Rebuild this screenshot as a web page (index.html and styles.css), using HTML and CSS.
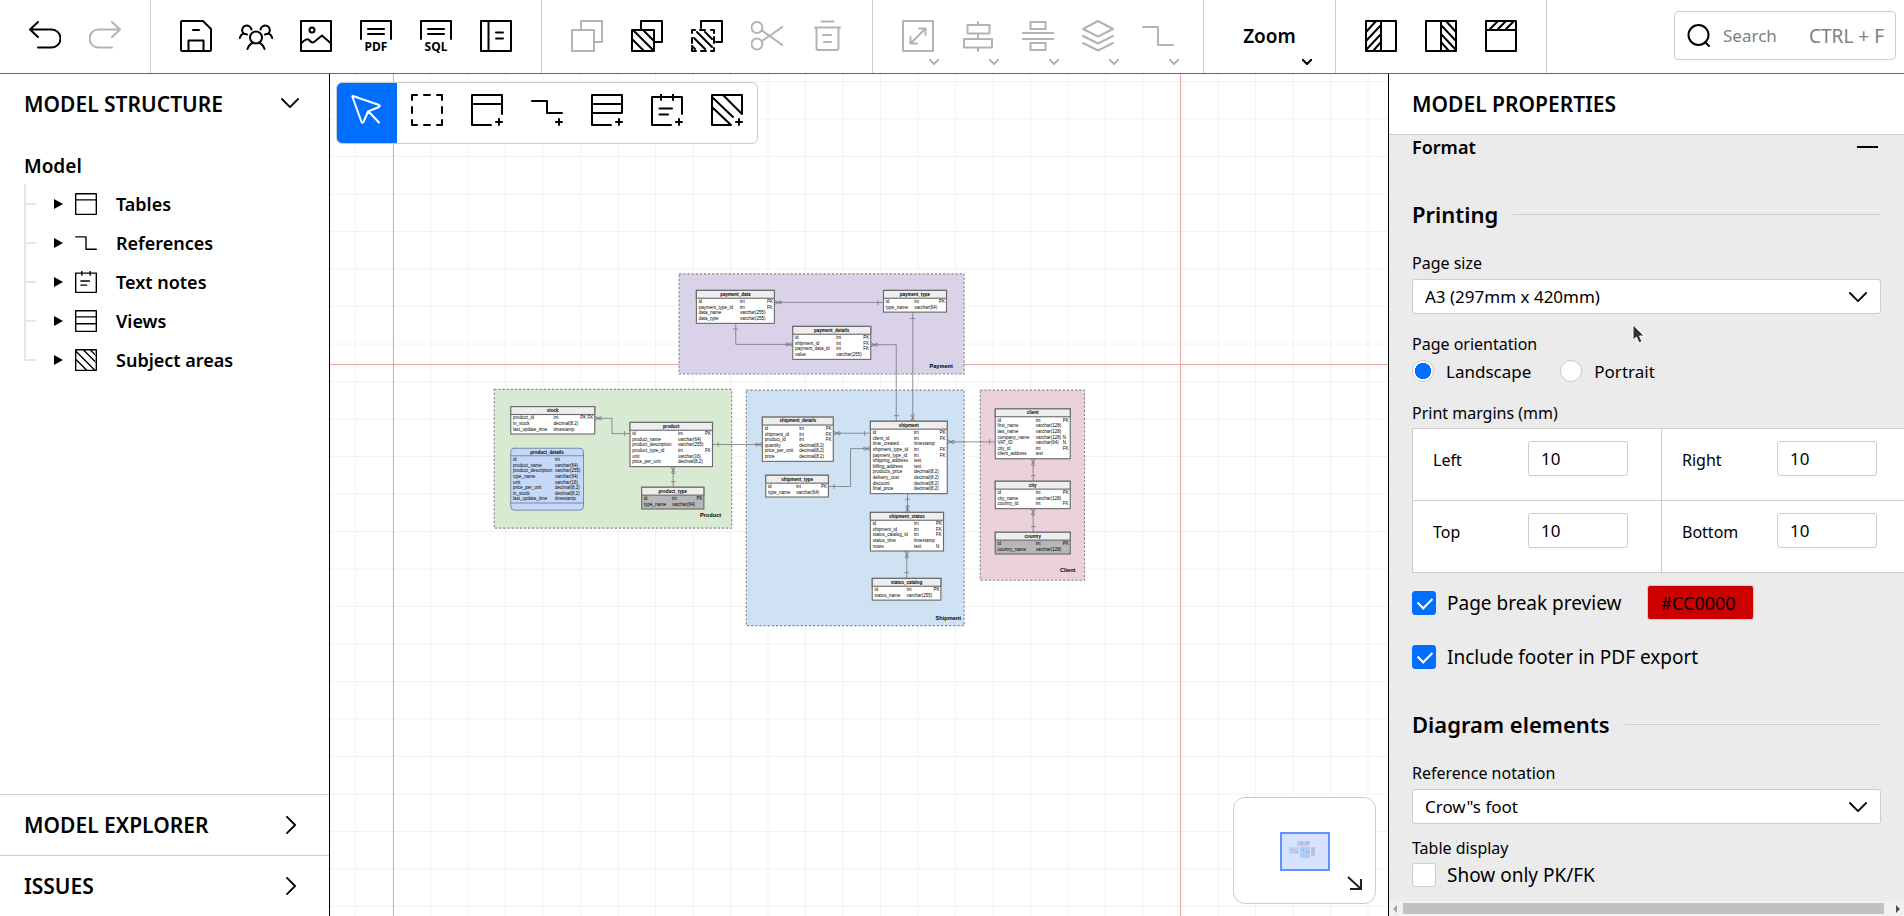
FILE: index.html
```html
<!DOCTYPE html>
<html lang="en">
<head>
    <meta charset="UTF-8">
    <meta name="viewport" content="width=device-width, initial-scale=1.0">
    <title>Database Modeler</title>
    <link rel="stylesheet" href="styles.css">
</head>
<body>
    <!-- icon set -->
    <svg class="sprite" aria-hidden="true">
        <symbol id="i-undo" viewBox="0 0 32 32"><path d="M9 2 1 9.5 9 17M1 9.5h21.5a9 9 0 0 1 0 18H9"/></symbol>
        <symbol id="i-redo" viewBox="0 0 32 32"><path d="m23 2 8 7.500L23 17M31 9.500H9.500a9 9 0 0 0 0 18H23"/></symbol>
        <symbol id="i-save" viewBox="0 0 32 32"><path d="M2 1h21l8 8v20.500q0 1.500-1.500 1.500h-27Q1 31 1 29.500V2q0-1 1-1zM8.500 31V20.500h15V31M13 10h6"/></symbol>
        <symbol id="i-users" viewBox="0 0 34 32"><circle cx="17" cy="17.500" r="6"/><path d="M8.500 29c1-3 2.500-5 5-6M25.500 29c-1-3-2.500-5-5-6M12.500 9.500a4.700 4.700 0 1 0-8 4C2.500 14.200 1.200 16 .8 18M4.500 13.500l3.500 1M21.500 9.500a4.700 4.700 0 1 1 8 4c2 .7 3.300 2.500 3.700 4.500M29.500 13.500l-3.500 1"/></symbol>
        <symbol id="i-image" viewBox="0 0 32 32"><path d="M1 1h30v30H1zM1 23.500q6-6 8-3.500 3 3.500 5 2l8-6.500 9 8"/><circle cx="12" cy="10" r="2.500"/></symbol>
        <symbol id="i-report" viewBox="0 0 32 32"><path d="M1 1h30v30H1zM8.500 1v30M16 12.500h7M16 18.500h7"/></symbol>
        <symbol id="i-copy" viewBox="0 0 32 32"><path d="M10 10V1h21v21h-8M1 10h22v21H1z"/></symbol>
        <symbol id="i-copy-area" viewBox="0 0 32 32"><path d="M10 10V1h21v21h-8M1 10h22v21H1zM3 11l19 19M13 11l9 9M1 19l11 11"/></symbol>
        <symbol id="i-copy-dash" viewBox="0 0 32 32"><path d="M10 8V1h21v21h-6M1 13v-3h3M9 10h5M20 10h3v3M23 17v6M23 28v3h-3M15 31h-5M5 31H1v-3M1 23v-5M6 12l15 15M14 12l7 7M3 18l11 11M1 26l3 3"/></symbol>
        <symbol id="i-cut" viewBox="0 0 32 32"><circle cx="6" cy="7.500" r="5.500"/><circle cx="6" cy="24" r="5.500"/><path d="M11 10.500 32 25.500M11 21 32 6.500"/></symbol>
        <symbol id="i-delete" viewBox="0 0 32 32"><path d="M10.500 1.500h12M4 7.500h25M5.500 7.500V28q0 2 2 2h18q2 0 2-2V7.500M12 15h8M13 22h7"/></symbol>
        <symbol id="i-resize" viewBox="0 0 32 32"><path d="M1 1h30v30H1zM8.500 23.500l15-15M17 8.500h6.500V15M8.500 17v6.500H15"/></symbol>
        <symbol id="i-center" viewBox="0 0 32 32"><path d="M16 2v3M5.500 5h22v8.500h-22zM16 13.500V19M2 19h28v8.500H2zM16 27.500V31"/></symbol>
        <symbol id="i-distribute" viewBox="0 0 32 32"><path d="M8.500 2h15v7h-15zM0 13h32M0 19h32M8.500 23h15v7h-15z"/></symbol>
        <symbol id="i-layers" viewBox="0 0 32 32"><path d="M16 1l15 8-15 7.500L1 9zM1 16l15 7.500L31 16M1 23l15 7.500L31 23"/></symbol>
        <symbol id="i-ref" viewBox="0 0 32 32"><path d="M1 7h15v18h15"/></symbol>
        <symbol id="i-panel-left" viewBox="0 0 32 32"><path d="M1 1h30v30H1zM16 1v30M1 12 11 1M1 21 16 5M1 30 16 14M8 31l8-9"/></symbol>
        <symbol id="i-panel-right" viewBox="0 0 32 32"><path d="M1 1h30v30H1zM16 1v30M31 12 21 1M31 21 16 5M31 30 16 14M24 31l-8-9"/></symbol>
        <symbol id="i-panel-top" viewBox="0 0 32 32"><path d="M1 1h30v30H1zM1 10h30M5 9l7-7M13 9l7-7M21 9l7-7"/></symbol>
        <symbol id="i-search" viewBox="0 0 24 24"><circle cx="11.500" cy="11" r="10"/><path d="m18 18 4 4"/></symbol>
        <symbol id="i-down" viewBox="0 0 20 12"><path d="m1 1 9 9 9-9"/></symbol>
        <symbol id="i-right" viewBox="0 0 12 20"><path d="m1 1 9 9-9 9"/></symbol>

        <symbol id="i-pointer" viewBox="0 0 32 32"><path d="M2 2l26 9q1.500 1 0 2l-11 4.500L12.500 28q-1 1.500-2 0L1.500 3Q1 2 2 2zM17.500 17.500 28 28.500"/></symbol>
        <symbol id="i-marquee" viewBox="0 0 32 32"><path d="M1 6V1h5M13 1h6M26 1h5v5M31 13v6M31 26v5h-5M19 31h-6M6 31H1v-5M1 19v-6"/></symbol>
        <symbol id="i-table" viewBox="0 0 32 32"><path d="M1 1h30v30H1zM1 10h30"/></symbol>
        <symbol id="i-note" viewBox="0 0 32 32"><path d="M1 3h30v28H1zM10 0v6M22 0v6M8.500 14.500H21M8.500 20.500H17"/></symbol>
        <symbol id="i-view" viewBox="0 0 32 32"><path d="M1 1h30v30H1zM1 10h30M1 20h30"/></symbol>
        <symbol id="i-area" viewBox="0 0 32 32"><path d="M1 1h30v30H1zM1 3l28 28M12 1l19 19M1 15l16 16M22 1l9 9"/></symbol>
        <symbol id="i-add-table" viewBox="0 0 32 32"><path d="M31 20V1H1v30h19M1 10h30M28 25v6M25 28h6"/></symbol>
        <symbol id="i-add-ref" viewBox="0 0 32 32"><path d="M1 7h15v12h15M28 25v6M25 28h6"/></symbol>
        <symbol id="i-add-view" viewBox="0 0 32 32"><path d="M31 19V1H1v30h19M1 10h30M1 19h30M28 25v6M25 28h6"/></symbol>
        <symbol id="i-add-note" viewBox="0 0 32 32"><path d="M31 20V3H1v28h19M10 0v6M22 0v6M8.500 14.500H21M8.500 20.500H17M28 25v6M25 28h6"/></symbol>
        <symbol id="i-add-area" viewBox="0 0 32 32"><path d="M31 20V1H1v30h19L1 13M1 3l21 20M12 1l19 19M28 25v6M25 28h6"/></symbol>
    </svg>

    <header class="topbar">
        <div class="group">
            <button class="tool" aria-label="Undo"><svg class="icon"><use href="#i-undo"/></svg></button>
            <button class="tool off" aria-label="Redo"><svg class="icon"><use href="#i-redo"/></svg></button>
        </div>
        <div class="group">
            <button class="tool" aria-label="Save"><svg class="icon"><use href="#i-save"/></svg></button>
            <button class="tool" aria-label="Share"><svg class="icon wide"><use href="#i-users"/></svg></button>
            <button class="tool" aria-label="Export image"><svg class="icon"><use href="#i-image"/></svg></button>
            <button class="tool" aria-label="Export PDF"><svg class="icon" viewBox="0 0 32 32"><path d="M1 19V1h30v18M8 9h16M8 14h16"/><text x="16" y="31">PDF</text></svg></button>
            <button class="tool" aria-label="Generate SQL"><svg class="icon" viewBox="0 0 32 32"><path d="M1 19V1h30v18M8 9h16M8 14h16"/><text x="16" y="31">SQL</text></svg></button>
            <button class="tool" aria-label="Documentation"><svg class="icon"><use href="#i-report"/></svg></button>
        </div>
        <div class="group">
            <button class="tool off" aria-label="Copy"><svg class="icon"><use href="#i-copy"/></svg></button>
            <button class="tool" aria-label="Copy area"><svg class="icon"><use href="#i-copy-area"/></svg></button>
            <button class="tool" aria-label="Copy area outline"><svg class="icon"><use href="#i-copy-dash"/></svg></button>
            <button class="tool off" aria-label="Cut"><svg class="icon"><use href="#i-cut"/></svg></button>
            <button class="tool off" aria-label="Delete"><svg class="icon"><use href="#i-delete"/></svg></button>
        </div>
        <div class="group">
            <button class="tool off" aria-label="Resize"><svg class="icon"><use href="#i-resize"/></svg><svg class="caret"><use href="#i-down"/></svg></button>
            <button class="tool off" aria-label="Align"><svg class="icon"><use href="#i-center"/></svg><svg class="caret"><use href="#i-down"/></svg></button>
            <button class="tool off" aria-label="Distribute"><svg class="icon"><use href="#i-distribute"/></svg><svg class="caret"><use href="#i-down"/></svg></button>
            <button class="tool off" aria-label="Order"><svg class="icon"><use href="#i-layers"/></svg><svg class="caret"><use href="#i-down"/></svg></button>
            <button class="tool off" aria-label="Line style"><svg class="icon"><use href="#i-ref"/></svg><svg class="caret"><use href="#i-down"/></svg></button>
        </div>
        <div class="group">
            <button class="tool zoom">Zoom<svg class="caret"><use href="#i-down"/></svg></button>
        </div>
        <div class="group">
            <button class="tool" aria-label="Left panel"><svg class="icon"><use href="#i-panel-left"/></svg></button>
            <button class="tool" aria-label="Right panel"><svg class="icon"><use href="#i-panel-right"/></svg></button>
            <button class="tool" aria-label="Top panel"><svg class="icon"><use href="#i-panel-top"/></svg></button>
        </div>
        <label class="search">
            <svg class="search-icon"><use href="#i-search"/></svg>
            <input type="text" placeholder="Search" aria-label="Search">
            <span>CTRL + F</span>
        </label>
    </header>

    <main class="workspace">
        <aside class="sidebar">
            <section class="structure">
                <button class="side-head">MODEL STRUCTURE<svg class="chev-down"><use href="#i-down"/></svg></button>
                <p class="tree-root">Model</p>
                <ul class="tree">
                    <li><span class="arrow"></span><svg class="tree-icon"><use href="#i-table"/></svg><a href="#tables">Tables</a></li>
                    <li><span class="arrow"></span><svg class="tree-icon"><use href="#i-ref"/></svg><a href="#references">References</a></li>
                    <li><span class="arrow"></span><svg class="tree-icon"><use href="#i-note"/></svg><a href="#notes">Text notes</a></li>
                    <li><span class="arrow"></span><svg class="tree-icon"><use href="#i-view"/></svg><a href="#views">Views</a></li>
                    <li><span class="arrow"></span><svg class="tree-icon"><use href="#i-area"/></svg><a href="#areas">Subject areas</a></li>
                </ul>
            </section>
            <button class="side-head closed">MODEL EXPLORER<svg class="chev-right"><use href="#i-right"/></svg></button>
            <button class="side-head closed">ISSUES<svg class="chev-right"><use href="#i-right"/></svg></button>
        </aside>

        <section class="canvas">
            <svg id="diagram" class="diagram">
                <defs>
                    <pattern id="grid" x="25" y="7" width="75" height="75" patternUnits="userSpaceOnUse">
                        <path d="M.5 0v75M38 0v75M0 .5h75M0 38h75"/>
                    </pattern>
                    <marker id="crow" viewBox="0 0 20 14" refX="20" refY="7" markerWidth="20" markerHeight="14" markerUnits="userSpaceOnUse" orient="auto-start-reverse">
                        <circle cx="5" cy="7" r="4"/><path d="M9 7 20 1M9 7l11 6"/>
                    </marker>
                    <marker id="bar" viewBox="0 0 20 14" refX="20" refY="7" markerWidth="20" markerHeight="14" markerUnits="userSpaceOnUse" orient="auto-start-reverse">
                        <path d="M5 0v14"/>
                    </marker>
                </defs>
                <rect width="100%" height="100%" fill="url(#grid)"/>
                <path class="page-break" d="M63.500 0v3000M850.500 0v3000M0 290.500h4000"/>
                <g id="model" transform="scale(.375)"></g>
            </svg>

            <div class="palette">
                <button class="tool active" aria-label="Select"><svg class="icon"><use href="#i-pointer"/></svg></button>
                <button class="tool" aria-label="Marquee"><svg class="icon"><use href="#i-marquee"/></svg></button>
                <button class="tool" aria-label="Add table"><svg class="icon"><use href="#i-add-table"/></svg></button>
                <button class="tool" aria-label="Add reference"><svg class="icon"><use href="#i-add-ref"/></svg></button>
                <button class="tool" aria-label="Add view"><svg class="icon"><use href="#i-add-view"/></svg></button>
                <button class="tool" aria-label="Add note"><svg class="icon"><use href="#i-add-note"/></svg></button>
                <button class="tool" aria-label="Add area"><svg class="icon"><use href="#i-add-area"/></svg></button>
            </div>

            <div class="minimap">
                <svg width="141" height="105" viewBox="0 0 141 105">
                    <rect x="47" y="35" width="48" height="37" fill="#d6e2fe" stroke="#6292fb" stroke-width="2"/>
                    <g opacity=".8">
                        <rect x="63" y="43" width="13" height="5" fill="#bbc1e8"/>
                        <rect x="55" y="49" width="10" height="7" fill="#bccfe6"/>
                        <rect x="66" y="49" width="10" height="11" fill="#a4c8f6"/>
                        <rect x="77" y="49" width="4" height="9" fill="#bfb8dc"/>
                        <path d="M66 45h3M72 45h3M57 52h3M61 54h3M68 52h2M72 54h3M78 52h2" stroke="#8f9fcc"/>
                    </g>
                    <path d="m114 79 13 12M127 81v10h-11" fill="none" stroke="#222" stroke-width="2"/>
                </svg>
            </div>
        </section>

        <aside class="properties">
            <h2 class="props-head">MODEL PROPERTIES</h2>
            <form class="props-body">
                <div class="format">Format<span class="minus"></span></div>

                <h3 class="legend">Printing</h3>
                <label class="caption" for="page-size">Page size</label>
                <div class="select">
                    <select id="page-size"><option>A3 (297mm x 420mm)</option></select>
                    <svg class="chev-down"><use href="#i-down"/></svg>
                </div>
                <span class="caption">Page orientation</span>
                <div class="radios">
                    <label><input type="radio" name="orientation" checked>Landscape</label>
                    <label><input type="radio" name="orientation">Portrait</label>
                </div>
                <span class="caption">Print margins (mm)</span>
                <div class="margins">
                    <div><label for="m-left">Left</label><input id="m-left" type="text" value="10"></div>
                    <div><label for="m-right">Right</label><input id="m-right" type="text" value="10"></div>
                    <div><label for="m-top">Top</label><input id="m-top" type="text" value="10"></div>
                    <div><label for="m-bottom">Bottom</label><input id="m-bottom" type="text" value="10"></div>
                </div>
                <div class="check-row">
                    <label class="check"><input type="checkbox" checked>Page break preview</label>
                    <input class="color" type="text" value="#CC0000" aria-label="Page break color">
                </div>
                <label class="check footer-check"><input type="checkbox" checked>Include footer in PDF export</label>

                <h3 class="legend">Diagram elements</h3>
                <label class="caption" for="notation">Reference notation</label>
                <div class="select">
                    <select id="notation"><option>Crow"s foot</option></select>
                    <svg class="chev-down"><use href="#i-down"/></svg>
                </div>
                <span class="caption near">Table display</span>
                <label class="check"><input type="checkbox">Show only PK/FK</label>
            </form>
            <div class="scrollbar"><i class="sb-left"></i><div class="thumb"></div><i class="sb-right"></i></div>
            <svg class="cursor" viewBox="0 0 14 20"><path d="M1 1v15l3.500-3 2.500 6 3-1.500-2.500-5.500H12z"/></svg>
        </aside>
    </main>

    <script src="script.js"></script>
</body>
</html>
```
FILE: styles.css
```css
* {
    box-sizing: border-box;
}
body {
    margin: 0;
    height: 100vh;
    display: flex;
    flex-direction: column;
    overflow: hidden;
    font-family: "Noto Sans", sans-serif;
    font-size: 18px;
    color: #000;
    background: #fff;
}
button, input, select {
    font: inherit;
    color: inherit;
}
button {
    border: none;
    background: none;
    padding: 0;
    cursor: pointer;
}
svg {
    display: block;
    fill: none;
    stroke: currentColor;
    stroke-width: 2;
    stroke-linecap: round;
    stroke-linejoin: round;
}
.sprite {
    position: absolute;
    width: 0;
    height: 0;
}

/* top bar */
.topbar {
    display: flex;
    flex: none;
    height: 74px;
    border-bottom: 1px solid #666;
}
.group {
    display: flex;
    padding: 0 15px;
    border-right: 1px solid #ccc;
}
.tool {
    position: relative;
    display: flex;
    align-items: center;
    justify-content: center;
    width: 60px;
    padding-bottom: 1px;
}
.off {
    color: #b3b3b3;
}
.icon {
    width: 32px;
    height: 32px;
    overflow: visible;
}
.icon.wide {
    width: 34px;
}
.icon text {
    font-size: 12px;
    font-weight: 700;
    text-anchor: middle;
    fill: currentColor;
    stroke: none;
}
.caret {
    position: absolute;
    right: 9px;
    bottom: 8px;
    width: 10px;
    height: 6px;
    stroke-width: 4;
}
.zoom {
    width: 101px;
    font-size: 19px;
    font-weight: 600;
}
.zoom .caret {
    right: 8px;
}
.search {
    display: flex;
    align-items: center;
    width: 222px;
    height: 49px;
    margin: 11px 8px 0 auto;
    padding: 0 11px 0 12px;
    border: 1px solid #ccc;
    border-radius: 4px;
    color: #808080;
    font-size: 19px;
}
.search-icon {
    flex: none;
    width: 24px;
    height: 24px;
    color: #000;
}
.search input {
    flex: 1;
    width: 0;
    padding: 0 0 0 12px;
    border: none;
    outline: none;
    background: none;
    font-size: 17px;
}
.search input::placeholder {
    color: #808080;
}

.workspace {
    display: flex;
    flex: 1;
    min-height: 0;
}

/* left side */
.sidebar {
    display: flex;
    flex-direction: column;
    flex: none;
    width: 330px;
    border-right: 1px solid #000;
}
.structure {
    flex: 1;
}
.side-head {
    display: flex;
    align-items: center;
    justify-content: space-between;
    width: 100%;
    height: 60px;
    padding: 0 30px 1px 24px;
    font-size: 21px;
    font-weight: 600;
}
.side-head.closed {
    height: 61px;
    border-top: 1px solid #ccc;
}
.chev-down {
    width: 18px;
    height: 11px;
}
.chev-right {
    width: 11px;
    height: 18px;
    margin-right: 2px;
}
.tree-root {
    margin: 20px 0 6px 24px;
    font-size: 19px;
    font-weight: 600;
    line-height: 24px;
}
.tree {
    margin: 0 0 0 24px;
    padding: 0;
    list-style: none;
}
.tree li {
    display: flex;
    align-items: center;
    height: 39px;
    padding-left: 30px;
    background: linear-gradient(#e6e6e6, #e6e6e6) 0 0 / 2px 100% no-repeat,
        linear-gradient(#e6e6e6, #e6e6e6) 0 50% / 12px 2px no-repeat;
}
.tree li:last-child {
    background-size: 2px 50%, 12px 2px;
}
.arrow {
    border: 5px solid transparent;
    border-left: 9px solid #000;
    border-right: 0;
}
.tree-icon {
    width: 22px;
    height: 22px;
    margin: 0 19px 0 12px;
}
.tree a {
    color: #000;
    font-weight: 600;
    text-decoration: none;
}

/* canvas */
.canvas {
    position: relative;
    flex: 1;
    min-width: 0;
    overflow: hidden;
}
.diagram {
    width: 100%;
    height: 100%;
    stroke: none;
    font-family: "Liberation Sans", Arial, sans-serif;
    font-size: 12px;
    fill: #000;
}
#grid path {
    stroke: #f2f2f2;
    stroke-width: 1;
}
.page-break {
    stroke: #f0a3a3;
    stroke-width: 1;
}
.area rect {
    stroke: #888;
    stroke-width: 3;
    stroke-dasharray: 6 5;
    stroke-linecap: butt;
}
.area text {
    font-size: 15px;
    font-weight: 700;
    text-anchor: end;
}
.entity rect {
    stroke: #6b6b6b;
    stroke-width: 3;
    stroke-linejoin: miter;
}
.entity .title {
    font-weight: 700;
    text-anchor: middle;
}
.view rect, .view path {
    stroke: #5f6f92;
    stroke-width: 2;
}
.edge, marker circle, marker path {
    fill: none;
    stroke: #6f6f76;
    stroke-width: 2;
    stroke-linecap: butt;
    stroke-linejoin: miter;
}
.palette {
    position: absolute;
    top: 8px;
    left: 6px;
    display: flex;
    border: 1px solid #ccc;
    border-radius: 6px;
    background: #fff;
    overflow: hidden;
}
.palette .tool {
    height: 60px;
    padding-bottom: 6px;
}
.palette .active {
    background: #006eff;
    color: #fff;
}
.minimap {
    position: absolute;
    right: 12px;
    bottom: 12px;
    border: 1px solid #ccc;
    border-radius: 12px;
    background: #fff;
}
.minimap svg {
    stroke: none;
    stroke-width: 1;
    stroke-linecap: butt;
    stroke-linejoin: miter;
}

/* right side */
.properties {
    position: relative;
    display: flex;
    flex-direction: column;
    flex: none;
    width: 516px;
    border-left: 1px solid #000;
    background: #ebebeb;
}
.props-head {
    flex: none;
    height: 61px;
    margin: 0;
    padding-left: 23px;
    border-bottom: 1px solid #ccc;
    background: #fff;
    font-size: 21px;
    font-weight: 600;
    line-height: 60px;
}
.props-body {
    flex: 1;
    min-height: 0;
    padding: 0 23px;
    overflow: hidden;
}
.format {
    display: flex;
    align-items: center;
    justify-content: space-between;
    font-weight: 600;
    line-height: 24px;
}
.minus {
    width: 21px;
    height: 2px;
    margin-right: 3px;
    background: #000;
}
.legend {
    display: flex;
    align-items: center;
    gap: 15px;
    margin: 39px 0 23px;
    font-size: 22px;
    font-weight: 600;
    line-height: 32px;
}
.legend::after {
    content: "";
    flex: 1;
    height: 1px;
    background: #ccc;
}
.caption {
    display: block;
    margin: 20px 0 5px;
    font-size: 16px;
    line-height: 20px;
}
.legend + .caption {
    margin: 0 0 6px;
}
.caption.near {
    margin-top: 14px;
}
.select {
    position: relative;
}
.select select {
    appearance: none;
    display: block;
    width: 100%;
    height: 35px;
    padding: 0 12px;
    border: 1px solid #ccc;
    border-radius: 3px;
    background: #fff;
    font-size: 17px;
}
.select .chev-down {
    position: absolute;
    top: 13px;
    right: 14px;
    pointer-events: none;
}
.radios {
    display: flex;
    gap: 29px;
    font-size: 17px;
}
.radios label, .check {
    display: flex;
    align-items: center;
    height: 24px;
}
input[type="radio"] {
    appearance: none;
    width: 22px;
    height: 22px;
    margin: 0 12px 0 0;
    border: 1px solid #ccc;
    border-radius: 50%;
    background: #fff;
}
input[type="radio"]:checked {
    background: radial-gradient(#006eff 8px, #fff 8px);
}
.margins {
    display: grid;
    grid-template-columns: 249px 249px;
    width: 499px;
    border: solid #ccc;
    border-width: 1px 0 0 1px;
    background: #fff;
    font-size: 16px;
}
.margins div {
    display: flex;
    justify-content: space-between;
    height: 72px;
    padding: 12px 33px 0 20px;
    border: solid #ccc;
    border-width: 0 1px 1px 0;
}
.margins label {
    line-height: 38px;
}
.margins input {
    width: 100px;
    height: 35px;
    padding: 0 12px;
    border: 1px solid #ccc;
    border-radius: 3px;
    background: #fff;
    font-size: 17px;
}
.check-row {
    display: flex;
    align-items: center;
    gap: 26px;
    margin-top: 12px;
}
.check {
    font-size: 19px;
}
.footer-check {
    margin-top: 25px;
}
input[type="checkbox"] {
    appearance: none;
    position: relative;
    width: 24px;
    height: 24px;
    margin: 0 11px 0 0;
    border: 1px solid #ccc;
    border-radius: 3px;
    background: #fff;
}
input[type="checkbox"]:checked {
    border-color: #006eff;
    background: #006eff;
}
input[type="checkbox"]:checked::after {
    content: "";
    position: absolute;
    top: 5px;
    left: 5px;
    width: 12px;
    height: 7px;
    border: solid #fff;
    border-width: 0 0 2px 2px;
    transform: rotate(-45deg);
}
.color {
    width: 107px;
    height: 35px;
    padding: 0 12px;
    border: 1px solid #ccc;
    border-radius: 3px;
    background: #c00;
}
.scrollbar {
    display: flex;
    align-items: center;
    flex: none;
    height: 15px;
    padding: 0 4px;
    background: #f1f1f1;
}
.thumb {
    flex: 1;
    height: 11px;
    margin: 0 12px 0 6px;
    background: #c1c1c1;
}
.sb-left, .sb-right {
    border: 4px solid transparent;
    border-right: 4px solid #a3a3a3;
    border-left: 0;
}
.sb-right {
    border-right: 0;
    border-left: 4px solid #505050;
}
.cursor {
    position: absolute;
    top: 250px;
    left: 243px;
    width: 14px;
    height: 20px;
    fill: #333;
    stroke: #fff;
    stroke-width: 1;
}
```
FILE: script.js
```js
const areas = [
    { name: "Payment", x: 931, y: 533, w: 760, h: 267, color: "#d9d2e9", lx: 1661, ly: 784 },
    { name: "Product", x: 438, y: 841, w: 633, h: 370, color: "#d9ead3", lx: 1043, ly: 1180 },
    { name: "Shipment", x: 1110, y: 843, w: 581, h: 628, color: "#cfe2f3", lx: 1683, ly: 1456 },
    { name: "Client", x: 1734, y: 843, w: 278, h: 507, color: "#ead1dc", lx: 1988, ly: 1328 }
];

// t = x offset of the type column
const tables = [
    { name: "payment_data", x: 977, y: 577, w: 208, t: 116, rows: ["id|int|PK", "payment_type_id|int|FK", "data_name|varchar(255)", "data_type|varchar(255)"] },
    { name: "payment_type", x: 1476, y: 577, w: 168, t: 82, rows: ["id|int|PK", "type_name|varchar(64)"] },
    { name: "payment_details", x: 1234, y: 673, w: 208, t: 116, rows: ["id|int|PK", "shipment_id|int|FK", "payment_data_id|int|FK", "value|varchar(255)"] },
    { name: "stock", x: 482, y: 887, w: 224, t: 114, rows: ["product_id|int|PK FK", "in_stock|decimal(8,2)", "last_update_time|timestamp"] },
    { name: "product", x: 800, y: 929, w: 220, t: 128, rows: ["id|int|PK", "product_name|varchar(64)", "product_description|varchar(255)", "product_type_id|int|FK", "unit|varchar(16)", "price_per_unit|decimal(8,2)"] },
    { name: "product_type", x: 831, y: 1102, w: 166, t: 81, fill: "#b7b7b7", rows: ["id|int|PK", "type_name|varchar(64)"] },
    { name: "product_details", x: 482, y: 998, w: 194, t: 118, view: true, rows: ["id|int", "product_name|varchar(64)", "product_description|varchar(255)", "type_name|varchar(64)", "unit|varchar(16)", "price_per_unit|decimal(8,2)", "in_stock|decimal(8,2)", "last_update_time|timestamp"] },
    { name: "shipment_details", x: 1153, y: 915, w: 189, t: 98, rows: ["id|int|PK", "shipment_id|int|FK", "product_id|int|FK", "quantity|decimal(8,2)", "price_per_unit|decimal(8,2)", "price|decimal(8,2)"] },
    { name: "shipment_type", x: 1162, y: 1070, w: 167, t: 81, rows: ["id|int|PK", "type_name|varchar(64)"] },
    { name: "shipment", x: 1441, y: 926, w: 205, t: 116, rows: ["id|int|PK", "client_id|int|FK", "time_created|timestamp", "shipment_type_id|int|FK", "payment_type_id|int|FK", "shipping_address|text", "billing_address|text", "products_price|decimal(8,2)", "delivery_cost|decimal(8,2)", "discount|decimal(8,2)", "final_price|decimal(8,2)"] },
    { name: "shipment_status", x: 1441, y: 1169, w: 195, t: 116, rows: ["id|int|PK", "shipment_id|int|FK", "status_catalog_id|int|FK", "status_time|timestamp", "notes|text|N"] },
    { name: "status_catalog", x: 1446, y: 1345, w: 183, t: 92, rows: ["id|int|PK", "status_name|varchar(255)"] },
    { name: "client", x: 1774, y: 893, w: 200, t: 108, rows: ["id|int|PK", "first_name|varchar(128)", "last_name|varchar(128)", "company_name|varchar(128)|N", "VAT_ID|varchar(64)|N", "city_id|int|FK", "client_address|text"] },
    { name: "city", x: 1774, y: 1086, w: 200, t: 108, rows: ["id|int|PK", "city_name|varchar(128)", "country_id|int|FK"] },
    { name: "country", x: 1774, y: 1222, w: 200, t: 108, fill: "#b7b7b7", rows: ["id|int|PK", "country_name|varchar(128)"] }
];

// every path starts at the "many" side
const edges = [
    "M1185 609H1476",
    "M1234 721H1082V665",
    "M1442 722H1510V926",
    "M1554 926V637",
    "M706 918H752V959H800",
    "M915 1047V1102",
    "M1153 988H1020",
    "M1342 958H1441",
    "M1441 999H1388V1100H1329",
    "M1646 981H1774",
    "M1540 1169V1119",
    "M1538 1272V1345",
    "M1875 1026V1086",
    "M1875 1159V1222"
];

function drawArea(a) {
    return `<g class="area">
        <rect x="${a.x}" y="${a.y}" width="${a.w}" height="${a.h}" fill="${a.color}"/>
        <text x="${a.lx}" y="${a.ly}">${a.name}</text>
    </g>`;
}

function drawTable(t) {
    const h = t.view ? 165 : 28 + t.rows.length * 15;
    let out;
    if (t.view) {
        out = `<rect width="${t.w}" height="${h}" rx="10" fill="#c6d8f8"/><path d="M0 20H${t.w}M0 146H${t.w}"/>`;
    } else {
        out = `<rect width="${t.w}" height="${h}" fill="${t.fill || "#fff"}"/><rect width="${t.w}" height="21" fill="#eee"/>`;
    }
    out += `<text class="title" x="${t.w / 2}" y="14">${t.name}</text>`;
    t.rows.forEach((row, i) => {
        const [name, type, key] = row.split("|");
        const y = 34 + i * 15;
        out += `<text x="6" y="${y}">${name}</text><text x="${t.t}" y="${y}">${type}</text>`;
        if (key) {
            out += `<text x="${t.w - (key.length > 2 ? 39 : 20)}" y="${y}">${key}</text>`;
        }
    });
    return `<g class="entity ${t.view ? "view" : ""}" transform="translate(${t.x} ${t.y})">${out}</g>`;
}

function drawEdge(d) {
    return `<path class="edge" d="${d}" marker-start="url(#crow)" marker-end="url(#bar)"/>`;
}

document.getElementById("model").innerHTML =
    areas.map(drawArea).join("") + edges.map(drawEdge).join("") + tables.map(drawTable).join("");
```
